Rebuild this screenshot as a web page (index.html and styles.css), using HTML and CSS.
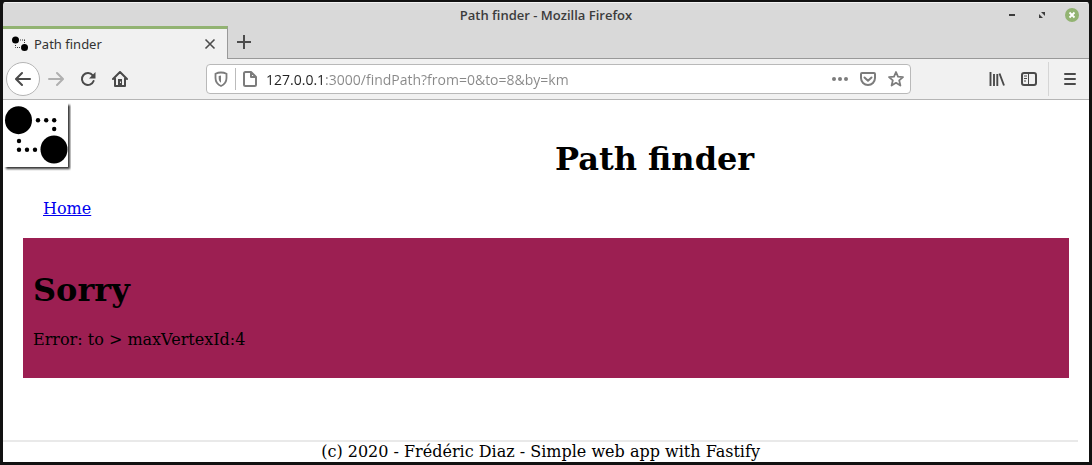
FILE: index.html
```html
<!DOCTYPE html>
<html lang="en">
<head>
<meta charset="utf-8">
<title>Path finder</title>
<link rel="stylesheet" href="styles.css">
</head>
<body>
<div class="window">
  <header class="titlebar">
    <span class="window-title">Path finder - Mozilla Firefox</span>
    <div class="window-controls">
      <button class="control" aria-label="Minimize"><svg width="14" height="14" viewBox="0 0 14 14"><path d="M4 7h6" stroke="#3c3c3c" stroke-width="2"/></svg></button>
      <button class="control" aria-label="Restore"><svg width="14" height="14" viewBox="0 0 14 14"><path d="M6 4h4v4zM4 6v4h4z" fill="#3c3c3c"/></svg></button>
      <button class="control" aria-label="Close window"><svg width="14" height="14" viewBox="0 0 14 14"><circle cx="7" cy="7" r="7" fill="#92b372"/><path d="M4.500 4.500l5 5m0-5l-5 5" stroke="#fff" stroke-width="1.800"/></svg></button>
    </div>
  </header>
  <div class="tabs">
    <div class="tab">
      <svg width="16" height="16" viewBox="0 0 16 16"><circle cx="3.500" cy="4" r="3.500"/><circle cx="12.500" cy="11.500" r="3.500"/><path d="M8 4h5M12.500 4v4M3.500 9v2.500h6" fill="none" stroke="#333" stroke-dasharray="1 1"/></svg>
      <span class="tab-title">Path finder</span>
      <button class="icon-button" aria-label="Close tab"><svg width="16" height="16" viewBox="0 0 16 16"><path d="M3.500 3.500l9 9m0-9l-9 9" stroke="#4c4c4c" stroke-width="1.600"/></svg></button>
    </div>
    <button class="new-tab" aria-label="New tab"><svg width="16" height="16" viewBox="0 0 16 16"><path d="M1 8h14M8 1v14" stroke="#4c4c4c" stroke-width="2"/></svg></button>
  </div>
  <nav class="toolbar" aria-label="Browser toolbar">
    <button class="back" aria-label="Back"><svg width="16" height="16" viewBox="0 0 16 16" fill="none" stroke="#4a4a4a" stroke-width="2" stroke-linecap="round" stroke-linejoin="round"><path d="M15 8H1.500M7 2L1 8l6 6"/></svg></button>
    <div class="nav-buttons">
      <button class="icon-button" aria-label="Forward"><svg width="16" height="16" viewBox="0 0 16 16" fill="none" stroke="#b0b0b0" stroke-width="2" stroke-linecap="round" stroke-linejoin="round"><path d="M1 8h13.500M9 2l6 6-6 6"/></svg></button>
      <button class="icon-button" aria-label="Reload"><svg width="16" height="16" viewBox="0 0 16 16"><path d="M12.700 4.300A6 6 0 1 0 13.600 10" fill="none" stroke="#4a4a4a" stroke-width="2" stroke-linecap="round"/><path d="M15.500 1v6.500H9z" fill="#4a4a4a"/></svg></button>
      <button class="icon-button" aria-label="Home"><svg width="16" height="16" viewBox="0 0 16 16"><path d="M1 8l7-7 7 7M3 7.500V15h10V7.500" fill="none" stroke="#4a4a4a" stroke-width="2" stroke-linecap="round" stroke-linejoin="round"/><path d="M6 8h4v7H6z" fill="#4a4a4a"/><path d="M8 10.500h1v1.500H8z" fill="#eee"/></svg></button>
    </div>
    <div class="address">
      <svg width="16" height="16" viewBox="0 0 16 16"><path d="M8 1.500c2 0 4 .5 5.500 1.200V7c0 4-2 6.500-5.500 8C4.500 13.500 2.500 11 2.500 7V2.700C4 2 6 1.500 8 1.500z" fill="none" stroke="#7c7c7c" stroke-width="1.800"/><path d="M8 4.500v7.300C6.300 10.500 5.700 9 5.700 7V4.900z" fill="#7c7c7c"/></svg>
      <span class="divider"></span>
      <svg width="16" height="16" viewBox="0 0 16 16" fill="none" stroke="#7c7c7c" stroke-width="2" stroke-linejoin="round"><path d="M3.500 1H9l5 5v7.500q0 1.500-1.500 1.500h-9Q2 15 2 13.500v-11Q2 1 3.500 1zM9 1v5h5"/></svg>
      <input class="url" type="text" aria-label="Address" value="127.0.0.1:3000/findPath?from=0&amp;to=8&amp;by=km">
      <div class="address-actions">
        <button class="icon-button" aria-label="Page actions"><svg width="16" height="16" viewBox="0 0 16 16" fill="#7c7c7c"><circle cx="2" cy="8" r="2"/><circle cx="8" cy="8" r="2"/><circle cx="14" cy="8" r="2"/></svg></button>
        <button class="icon-button" aria-label="Save to Pocket"><svg width="16" height="16" viewBox="0 0 16 16" fill="none" stroke="#7c7c7c" stroke-width="2" stroke-linecap="round" stroke-linejoin="round"><path d="M2 2h12q1 0 1 1v4A7 7 0 0 1 1 7V3q0-1 1-1zM4.500 6.500L8 9.800l3.500-3.300"/></svg></button>
        <button class="icon-button" aria-label="Bookmark"><svg width="16" height="16" viewBox="0 0 16 16" fill="none" stroke="#7c7c7c" stroke-width="1.800" stroke-linejoin="round"><path d="M8 1l2 4.700 5 .4-3.800 3.300 1.200 5.100L8 11.800l-4.400 2.700 1.200-5.100L1 6.100l5-.4z"/></svg></button>
      </div>
    </div>
    <div class="tools">
      <button class="icon-button" aria-label="Library"><svg width="16" height="16" viewBox="0 0 16 16" stroke="#4a4a4a" stroke-width="1.900"><path d="M1.500 1v14M5 3v12M8.300 3v12M10.500 2.500L15 14.500"/></svg></button>
      <button class="icon-button" aria-label="Sidebar"><svg width="16" height="16" viewBox="0 0 16 16" fill="none" stroke="#4a4a4a"><rect x="1" y="2" width="14" height="12" rx="2" stroke-width="2"/><path d="M7.500 2v12M3 5h3M3 7.500h3M3 10h2"/></svg></button>
    </div>
    <div class="menu">
      <button class="icon-button" aria-label="Menu"><svg width="16" height="16" viewBox="0 0 16 16" stroke="#4a4a4a" stroke-width="2" stroke-linecap="round"><path d="M3 3h10M3 8h10M3 13h10"/></svg></button>
    </div>
  </nav>
  <div class="page">
    <div class="page-header">
      <svg class="logo" width="68" height="71" viewBox="0 0 68 71" role="img" aria-label="Path finder logo">
        <defs><filter id="shadow" x="-10%" y="-10%" width="130%" height="130%"><feDropShadow dx="2" dy="2" stdDeviation="1" flood-color="#000" flood-opacity="0.800"/></filter></defs>
        <rect x="1" y="3" width="64" height="64" fill="#fff" filter="url(#shadow)"/>
        <rect width="65" height="67" fill="#fff"/>
        <ellipse cx="15.500" cy="20.200" rx="13.500" ry="14"/><ellipse cx="51" cy="49.500" rx="13.500" ry="14"/>
        <circle cx="35" cy="20.300" r="2.200"/><circle cx="43.200" cy="20.300" r="2.200"/><circle cx="51.200" cy="20.300" r="2.200"/><circle cx="51.200" cy="29" r="2.200"/>
        <circle cx="16" cy="41" r="2.200"/><circle cx="16" cy="49.700" r="2.200"/><circle cx="24" cy="49.700" r="2.200"/><circle cx="32" cy="49.700" r="2.200"/>
      </svg>
      <h1 class="page-title">Path finder</h1>
    </div>
    <nav class="links"><a href="#">Home</a></nav>
    <main class="error">
      <h1 class="error-title">Sorry</h1>
      <p class="error-text">Error: to &gt; maxVertexId:4</p>
    </main>
    <footer class="footer">(c) 2020 - Frédéric Diaz - Simple web app with Fastify</footer>
  </div>
</div>
</body>
</html>
```
FILE: styles.css
```css
* { box-sizing: border-box; }
body {
  margin: 0;
  min-height: 100vh;
  display: flex;
  padding: 2px 3px 3px;
  background: #111;
  font-family: "Noto Sans", "Open Sans", sans-serif;
}
svg { display: block; flex: none; }
button { padding: 0; border: 0; background: none; flex: none; }

.window {
  flex: 1;
  display: flex;
  flex-direction: column;
  background: #d9d9d9;
  border-radius: 3px 3px 0 0;
  overflow: hidden;
}
.titlebar {
  display: grid;
  grid-template-columns: 1fr auto 1fr;
  align-items: center;
  height: 24px;
  padding: 0 10px;
  border-top: 1px solid #f2f2f2;
}
.window-title {
  grid-column: 2;
  color: #3c3c3c;
  font-family: "Open Sans", "Noto Sans", sans-serif;
  font-size: 13px;
  font-weight: 600;
}
.window-controls { display: flex; justify-content: flex-end; gap: 16px; }

.tabs { display: flex; height: 33px; }
.tab {
  display: flex;
  align-items: center;
  gap: 6px;
  width: 225px;
  padding: 0 9px;
  background: #f1f1f1;
  border-top: 3px solid #92b372;
  border-right: 1px solid #999;
}
.tab-title { flex: 1; color: #333; font-size: 13px; }
.new-tab {
  flex: 1;
  display: flex;
  align-items: center;
  padding-left: 8px;
  border-bottom: 1px solid #999;
}
.toolbar {
  display: flex;
  align-items: center;
  height: 41px;
  padding: 0 3px;
  background: #f1f1f1;
  border-bottom: 1px solid #b5b5b5;
}
.back {
  display: flex;
  align-items: center;
  justify-content: center;
  width: 34px;
  height: 34px;
  border: 1px solid #b5b5b5;
  border-radius: 50%;
  background: #fff;
}
.nav-buttons { display: flex; gap: 16px; margin: 0 78px 0 8px; }
.address {
  flex: 1;
  display: flex;
  align-items: center;
  height: 30px;
  padding: 0 6px;
  background: #fff;
  border: 1px solid #b9b9b9;
  border-radius: 4px;
}
.divider { width: 1px; height: 22px; margin: 0 6px; background: #bbb; }
.url {
  flex: 1;
  min-width: 0;
  margin: 0 8px;
  padding: 0;
  border: 0;
  outline: 0;
  font: 14px "Open Sans", "Noto Sans", sans-serif;
  color: transparent;
  caret-color: #222;
  background: linear-gradient(to right, #222 60px, #888 60px);
  -webkit-background-clip: text;
  background-clip: text;
}
.address-actions { display: flex; gap: 12px; }
.tools { display: flex; gap: 16px; margin: 0 11px 0 78px; }
.menu {
  display: flex;
  align-items: center;
  height: 34px;
  padding: 0 8px 0 13px;
  border-left: 1px solid #d5d5d5;
}

.page {
  flex: 1;
  display: flex;
  flex-direction: column;
  background: #fff;
  color: #000;
  font: 16px/19px "DejaVu Serif", serif;
}
.page-header { display: grid; grid-template-columns: 1fr 4fr; }
.page-title { margin: 40px 0 21px; font-size: 32px; line-height: 38px; text-align: center; }
.links { padding: 0 40px; }
.links a { color: #00e; }
.error {
  margin: 20px 20px 62px;
  padding: 33px 10px 29px;
  background: #9c1f52;
}
.error-title { margin: 0 0 21px; font-size: 32px; line-height: 38px; }
.error-text { margin: 0; }
.footer {
  width: 99%;
  margin-top: auto;
  padding-bottom: 1px;
  border-top: 2px solid #e9e9e9;
  text-align: center;
}
```
